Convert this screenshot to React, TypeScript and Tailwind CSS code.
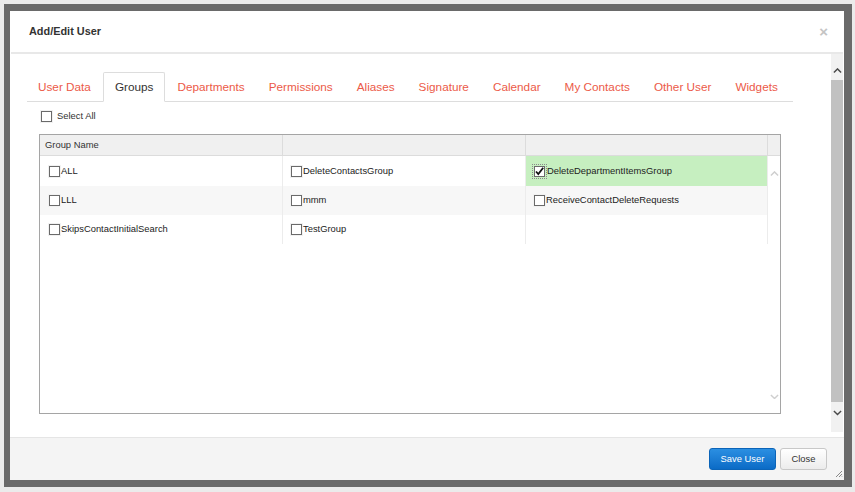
import React from "react";

const tabs = [
  "User Data",
  "Groups",
  "Departments",
  "Permissions",
  "Aliases",
  "Signature",
  "Calendar",
  "My Contacts",
  "Other User",
  "Widgets",
];

const rows: { name: string; checked?: boolean }[][] = [
  [{ name: "ALL" }, { name: "DeleteContactsGroup" }, { name: "DeleteDepartmentItemsGroup", checked: true }],
  [{ name: "LLL" }, { name: "mmm" }, { name: "ReceiveContactDeleteRequests" }],
  [{ name: "SkipsContactInitialSearch" }, { name: "TestGroup" }, { name: "" }],
];

function Box({ checked }: { checked?: boolean }) {
  if (checked) {
    return (
      <span className="inline-flex items-center justify-center w-[15px] h-[15px] outline-1 outline-dotted outline-[#8a8a8a] -outline-offset-1">
        <span className="relative inline-block w-[11px] h-[11px] border border-[#6a6a6a] bg-white">
          <svg width="11" height="11" viewBox="0 0 11 11" className="absolute -left-[1px] -top-[1px]">
            <path d="M2 5.5 L4.3 8 L9.2 1.8" stroke="#111" strokeWidth="1.8" fill="none" />
          </svg>
        </span>
      </span>
    );
  }
  return (
    <span className="inline-block w-[13px] h-[13px] p-[1px] bg-[#f1f1f1] shrink-0">
      <span className="block w-[11px] h-[11px] border border-[#6a6a6a] bg-white" />
    </span>
  );
}

function ChevUp({ color = "#555", size = 9 }: { color?: string; size?: number }) {
  return (
    <svg width={size} height={size * 0.6} viewBox="0 0 10 6">
      <path d="M1 5 L5 1 L9 5" stroke={color} strokeWidth="1.6" fill="none" />
    </svg>
  );
}
function ChevDown({ color = "#555", size = 9 }: { color?: string; size?: number }) {
  return (
    <svg width={size} height={size * 0.6} viewBox="0 0 10 6">
      <path d="M1 1 L5 5 L9 1" stroke={color} strokeWidth="1.6" fill="none" />
    </svg>
  );
}

export default function App() {
  const colW = ["w-[243px] border-r", "w-[243px] border-r", "w-[242px] border-r"];
  return (
    <div className="w-[855px] h-[492px] bg-[#ebebeb] pt-[4px] pl-[4px] pr-[3px] pb-[5px] font-['Liberation_Sans',Arial,sans-serif]">
      <div className="w-full h-full bg-[#6a6a6a] pt-[7px] pl-[6px] pr-[8px] pb-[7px]">
        <div className="w-full h-full bg-white flex flex-col">
          {/* header */}
          <div className="h-[43px] shrink-0 flex items-center justify-between pl-[18px] pr-[15px] border-b-2 border-[#e8e8e8] mr-[1px] ml-[1px]">
            <span className="text-[10.9px] font-bold text-[#333]">Add/Edit User</span>
            <span className="text-[15px] font-bold text-[#c4c4c4] leading-none">×</span>
          </div>
          {/* body */}
          <div className="flex-1 flex min-h-0">
            <div className="flex-1 pl-[17px] pt-[18px]">
              <div className="w-[766px]">
                {/* tabs */}
                <div className="flex border-b border-[#dddddd] h-[30px] whitespace-nowrap">
                  {tabs.map((t, i) =>
                    t === "Groups" ? (
                      <div
                        key={t}
                        className="shrink-0 h-[30px] px-[11px] flex items-center text-[11.75px] text-[#333] bg-white border border-[#dddddd] border-b-white rounded-t-[2px]"
                      >
                        {t}
                      </div>
                    ) : (
                      <div
                        key={t}
                        className={`shrink-0 h-[30px] px-[11px] flex items-center text-[11.75px] text-[#ec5a48] border border-transparent ${
                          i === 0 ? "pl-[10px]" : ""
                        }`}
                      >
                        {t}
                      </div>
                    )
                  )}
                </div>
                {/* select all */}
                <div className="flex items-center mt-[8px] ml-[13px] h-[13px]">
                  <Box />
                  <span className="ml-[4px] text-[9.4px] text-[#333]">Select All</span>
                </div>
                {/* grid */}
                <div className="mt-[11px] ml-[12px] w-[742px] h-[280px] border border-[#a5a5a5] flex flex-col text-[9.4px] text-[#222] whitespace-nowrap">
                  <div className="flex h-[21px] bg-[#f0f0f0] border-b border-[#dcdcdc] shrink-0">
                    <div className="w-[243px] border-r border-[#dcdcdc] pl-[5px] flex items-center text-[#333]">Group Name</div>
                    <div className="w-[243px] border-r border-[#dcdcdc]" />
                    <div className="w-[242px] border-r border-[#dcdcdc]" />
                    <div className="w-[12px]" />
                  </div>
                  <div className="flex flex-1 min-h-0">
                    <div className="w-[728px] flex flex-col">
                      {rows.map((r, ri) => (
                        <div
                          key={ri}
                          className={`flex ${ri === 0 ? "h-[30px]" : "h-[29px]"} ${ri === 1 ? "bg-[#f7f7f7]" : "bg-white"}`}
                        >
                          {r.map((c, ci) => (
                            <div
                              key={ci}
                              className={`${colW[ci]} border-[#ececec] flex items-center ${
                                c.checked ? "bg-[#c6efc0] pl-[6px]" : ci === 0 ? "pl-[8px]" : "pl-[7px]"
                              }`}
                            >
                              {c.name && (
                                <>
                                  <Box checked={c.checked} />
                                  <span>{c.name}</span>
                                </>
                              )}
                            </div>
                          ))}
                        </div>
                      ))}
                    </div>
                    <div className="w-[12px] flex flex-col items-center justify-between pt-[15px] pb-[14px]">
                      <ChevUp color="#cfcfcf" size={9} />
                      <ChevDown color="#cfcfcf" size={9} />
                    </div>
                  </div>
                </div>
              </div>
            </div>
            {/* scrollbar */}
            <div className="w-[12px] mr-[1px] mb-[5px] bg-[#f1f1f1] flex flex-col items-center pt-[10px]">
              <div className="h-[14px] flex items-center justify-center">
                <ChevUp color="#4a4a4a" size={9} />
              </div>
              <div className="mt-[2px] h-[322px] w-full bg-[#c1c1c1]" />
              <div className="mt-[4px] h-[14px] flex items-center justify-center">
                <ChevDown color="#4a4a4a" size={9} />
              </div>
            </div>
          </div>
          {/* footer */}
          <div className="relative h-[43px] shrink-0 border-t border-[#e5e5e5] bg-[#f4f4f4] flex items-center justify-end pr-[17px] gap-[4px]">
            <button className="w-[67px] h-[22px] rounded-[3px] border border-[#0b64b8] bg-gradient-to-b from-[#2b8fe2] to-[#0a6bc6] text-white text-[9.4px]">
              Save User
            </button>
            <button className="w-[47px] h-[22px] rounded-[3px] border border-[#c8c8c8] bg-gradient-to-b from-white to-[#ececec] text-[#333] text-[9.4px]">
              Close
            </button>
            <svg width="8" height="8" viewBox="0 0 8 8" className="absolute right-[1px] bottom-[2px]">
              <path d="M7 1 L1 7 M7 4 L4 7 M7 6.5 L6.5 7" stroke="#888" strokeWidth="1" />
            </svg>
          </div>
        </div>
      </div>
    </div>
  );
}
